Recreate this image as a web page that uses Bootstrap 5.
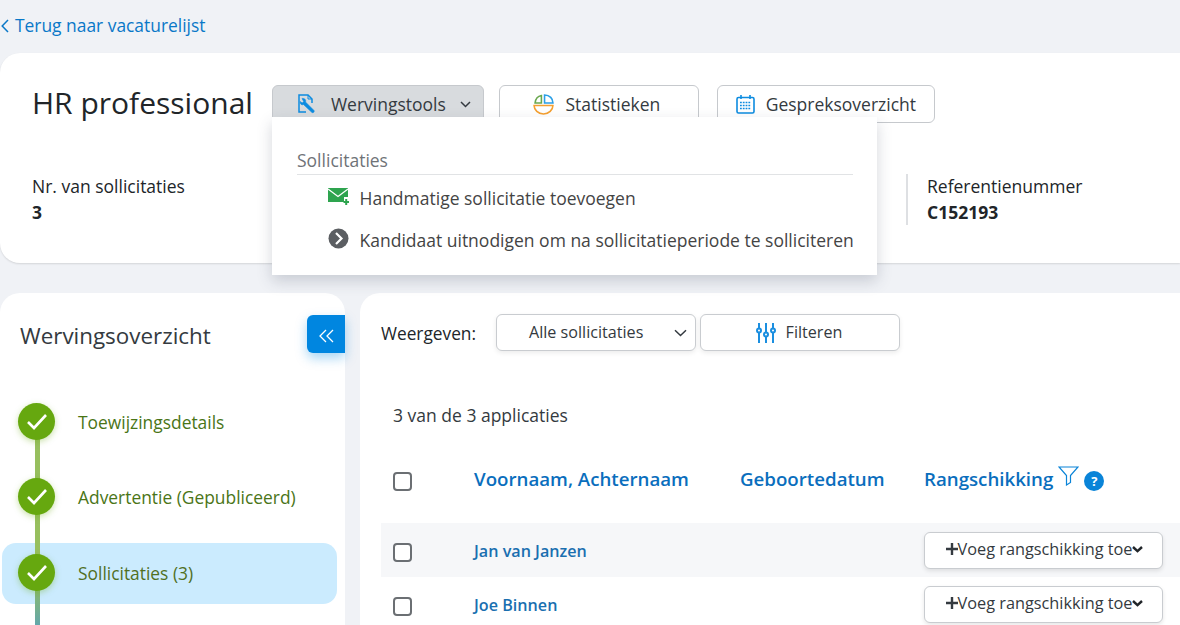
<!DOCTYPE html>
<html lang="nl">
<head>
<meta charset="utf-8">
<title>HR professional</title>
<link href="https://cdn.jsdelivr.net/npm/bootstrap@5.3.0/dist/css/bootstrap.min.css" rel="stylesheet">
<style>
html,body{height:625px;overflow:hidden}
body{background:#f0f2f6;font-family:"Open Sans","Liberation Sans",sans-serif;color:#212529;font-size:17.5px}
.back-row{height:53px;padding-left:1px;padding-top:15px;font-size:17.4px;line-height:21px}
.back-row a{color:#0a78c8;text-decoration:none}
.back-row svg{margin-right:6px;vertical-align:-1px}
.head-panel{height:210px;background:#fff;border-radius:20px 0 0 20px;box-shadow:0 1px 2px rgba(0,0,0,.12);padding:32px 0 0 32px;position:relative;width:1180px}
.job-title{font-size:30px;line-height:36px;padding-bottom:2px;font-weight:400;margin:0 19px 0 0;color:#212529;white-space:nowrap}
.tool-btn{height:38px;background:#fff;border:1px solid #c6c9cd;border-radius:6px;font-size:17.5px;color:#343a40;padding:0}
.tool-btn.is-open{background:#d8dbde;width:212px;margin-right:15px}
.tool-btn svg{flex:none}
.stat-btn{width:200px;margin-right:18px;padding-right:4px}
.talk-btn{width:218px}
.ico-gap{margin-left:11px}
.ico-gap-wide{margin-left:14px}
.tool-chev{margin-right:12px}
.stat-name{font-size:17.5px;line-height:24px;color:#212529}
.stat-val{font-size:17.5px;line-height:28px;font-weight:700}
.stats-row{margin-top:51px}
.ref-block{margin-left:auto;border-left:2px solid #dee0e3;padding-left:19px;height:51px;width:274px}
.tools-menu{position:absolute;left:272px;top:64px;width:605px;height:158px;background:#fff;box-shadow:0 6px 14px rgba(60,70,90,.22);padding:31px 24px 0 25px;z-index:5}
.menu-head{font-size:17.5px;line-height:24px;color:#6f7378;border-bottom:1px solid #e1e3e5;height:27px;margin-bottom:2px}
.menu-line{font-size:17.5px;line-height:24px;color:#444;white-space:nowrap;height:42px;padding-left:31px}
.menu-line svg{margin-top:-4px;flex:none}
.menu-txt{margin-left:2.5px}
.main-row{margin-top:30px;gap:15px}
.side-panel{width:345px;height:340px;background:#fff;border-radius:20px 20px 0 0;position:relative;flex:none;padding:27px 0 0 2px}
.side-title{font-size:22.4px;line-height:32px;color:#343a40;padding-left:18px;font-weight:400;margin:0}
.collapse-tab{position:absolute;right:0;top:22px;width:38px;height:38px;background:#0086e0;border-radius:6px 0 0 6px;box-shadow:0 5px 12px rgba(0,134,224,.35);border:0;padding:0}
.steps{margin-top:32px;width:335px;position:relative}
.step-row{height:75px;display:flex;align-items:center;padding:2px 0 0 16px;border-radius:14px;color:#4a7517;font-size:17.4px;position:relative}
.step-row.now{height:61px;padding-top:0;background:#cbebfe;color:#51701f;margin-top:9px}
.step-row .step-dot{margin-bottom:2px}
.step-dot{width:37px;height:37px;border-radius:50%;background:#66a80f;box-shadow:0 2px 6px rgba(102,168,15,.35);display:flex;align-items:center;justify-content:center;margin-right:23px;position:relative;z-index:2;flex:none}
.step-wire{position:absolute;left:33px;width:5px;background:#97bf5e;z-index:1}
.wire-a{top:50px;height:50px}
.wire-b{top:125px;height:50px}
.wire-c{top:200px;height:50px;background:linear-gradient(#8fbb63,#5aa3bb)}
.work-panel{width:860px;height:340px;background:#fff;border-radius:20px 20px 0 0;padding:21px 0 0 21px;flex:none}
.view-label{font-size:17.3px;width:115px;padding-top:2px}
.select-btn,.filter-btn{height:37px;width:200px;border:1px solid #c9ccd0;border-radius:6px;background:#fff;font-size:16.15px;color:#343a40;box-shadow:0 2px 5px rgba(0,0,0,.08);padding:0}
.select-btn svg,.filter-btn svg{flex:none}
.select-btn .sel-txt{margin-left:32px}
.filter-btn{margin-left:4px;padding-right:2px}
.filter-txt{margin-left:10px}
.count-line{font-size:17.5px;line-height:24px;margin:52px 0 0 12px;color:#343a40}
.app-grid{width:799px}
.grid-line{display:flex;align-items:center}
.grid-head{height:96px;padding-top:8px}
.grid-item{height:54px}
.grid-item.odd{background:#f6f7f9}
.cell-a{width:93px;padding-left:12px;flex:none}
.cell-b{width:266px;flex:none}
.cell-c{width:184px;flex:none}
.cell-rank{display:flex;align-items:center}
.sort-link{color:#0a6ebd;font-weight:600;font-size:18.7px;text-decoration:none;white-space:nowrap}
.name-link{color:#1a6fb0;font-weight:600;font-size:16.15px;text-decoration:none}
.tick{width:19px;height:19px;border:2px solid #6b6f73;border-radius:4px;margin:5px 0 0;display:block;background:#fff;appearance:none}
.rank-btn{width:239px;height:37px;background:#fff;border:1px solid #c9ccd0;border-radius:6px;box-shadow:0 2px 4px rgba(0,0,0,.1);font-size:16.3px;color:#343a40;padding:0 0 2px 2px;display:flex;align-items:center;justify-content:center;flex:none}
.rank-btn svg{flex:none}
.funnel{margin:0 0 5px 5px;flex:none}
.help-dot{width:20px;height:20px;border-radius:50%;background:#0a84d8;color:#fff;font-weight:700;font-size:13px;line-height:20px;text-align:center;display:block;margin:5px 0 0 5px;flex:none}
</style>
</head>
<body>
<div class="back-row"><a href="#"><svg width="8" height="14" viewBox="0 0 8 14" fill="none" stroke="#0a78c8" stroke-width="1.5"><path d="M7 1 1.200 7 7 13"/></svg>Terug naar vacaturelijst</a></div>

<section class="head-panel">
  <div class="d-flex align-items-center">
    <h1 class="job-title">HR professional</h1>
    <button class="tool-btn is-open d-flex align-items-center" type="button">
      <svg class="ms-4" width="20" height="20" viewBox="0 0 20 20" fill="none" stroke="#0d8ce0" stroke-width="1.500"><path d="M9 18H2V1h9l4 4v4"/><path d="M11 1v4h4" stroke-width="1"/><path d="M5 4.500c2-.5 4.500 1 3.500 3.500l8.500 8.500c.8 1.200-.8 2.800-2 2L6.500 10.500C4.500 11.500 3 10 3.200 7.500l2 1.500 1.500-1.500z" fill="#0d8ce0" stroke-width=".6"/></svg>
      <span class="ico-gap-wide">Wervingstools</span>
      <svg class="ms-auto tool-chev" width="11" height="7" viewBox="0 0 11 7" fill="none" stroke="#343a40" stroke-width="1.500"><path d="M1 1 5.500 5.500 10 1"/></svg>
    </button>
    <button class="tool-btn stat-btn d-flex align-items-center justify-content-center" type="button">
      <svg width="21" height="21" viewBox="0 0 20 20" fill="none" stroke-width="1.500"><path d="M8 1.500C5 2 2.500 4.500 2 8.500h6z" stroke="#6aa84f"/><path d="M11 1v7.500h8C19 4.500 16 1 11 1z" stroke="#2b9fe6"/><path d="M1 11h18c0 4-4 8-9 8s-9-4-9-8z" stroke="#f5a030"/></svg>
      <span class="ico-gap">Statistieken</span>
    </button>
    <button class="tool-btn talk-btn d-flex align-items-center justify-content-center" type="button">
      <svg width="19" height="19" viewBox="0 0 19 19"><rect x="1" y="2.500" width="17" height="15.500" rx="1.500" fill="none" stroke="#0d8ce0" stroke-width="1.600"/><path d="M5 0v4M14 0v4" stroke="#0d8ce0" stroke-width="1.600"/><path d="M4 7.500h11M4 10.500h11M4 13.500h11" stroke="#0d8ce0" stroke-width="1.600" stroke-dasharray="1.800 1"/></svg>
      <span class="ico-gap">Gespreksoverzicht</span>
    </button>
  </div>
  <div class="d-flex stats-row">
    <div>
      <div class="stat-name">Nr. van sollicitaties</div>
      <div class="stat-val">3</div>
    </div>
    <div class="ref-block">
      <div class="stat-name">Referentienummer</div>
      <div class="stat-val">C152193</div>
    </div>
  </div>
  <div class="tools-menu">
    <div class="menu-head">Sollicitaties</div>
    <div class="menu-line d-flex align-items-center gap-2">
      <svg width="21" height="17" viewBox="0 0 21 17"><path d="M0 0h20v9h-4v5H0z" fill="#2ea44f"/><path d="M0 1l10 7.500L20 1" fill="none" stroke="#fff" stroke-width="1.200"/><path d="M15.500 14h5.500M18.200 11v6" stroke="#2ea44f" stroke-width="2"/></svg>
      <span class="menu-txt">Handmatige sollicitatie toevoegen</span>
    </div>
    <div class="menu-line d-flex align-items-center gap-2">
      <svg width="21" height="21" viewBox="0 0 21 21"><circle cx="10.500" cy="10.500" r="10" fill="#5b5e62"/><path d="M8 5l5.500 5.500L8 16" fill="none" stroke="#fff" stroke-width="2.200"/></svg>
      <span class="menu-txt">Kandidaat uitnodigen om na sollicitatieperiode te solliciteren</span>
    </div>
  </div>
</section>

<div class="d-flex main-row">
  <aside class="side-panel">
    <h2 class="side-title">Wervingsoverzicht</h2>
    <button class="collapse-tab" type="button" aria-label="Inklappen"><svg width="15" height="14" viewBox="0 0 15 14" fill="none" stroke="#fff" stroke-width="1.300"><path d="M7 1 1 7l6 6M14 1 8 7l6 6"/></svg></button>
    <div class="steps">
      <span class="step-wire wire-a"></span><span class="step-wire wire-b"></span><span class="step-wire wire-c"></span>
      <div class="step-row"><span class="step-dot"><svg width="22" height="18" viewBox="0 0 22 18" fill="none" stroke="#fff" stroke-width="2.600"><path d="M2 9l6 6L20 2"/></svg></span>Toewijzingsdetails</div>
      <div class="step-row"><span class="step-dot"><svg width="22" height="18" viewBox="0 0 22 18" fill="none" stroke="#fff" stroke-width="2.600"><path d="M2 9l6 6L20 2"/></svg></span>Advertentie (Gepubliceerd)</div>
      <div class="step-row now"><span class="step-dot"><svg width="22" height="18" viewBox="0 0 22 18" fill="none" stroke="#fff" stroke-width="2.600"><path d="M2 9l6 6L20 2"/></svg></span>Sollicitaties (3)</div>
    </div>
  </aside>
  <main class="work-panel">
    <div class="d-flex align-items-center">
      <span class="view-label">Weergeven:</span>
      <button class="select-btn d-flex align-items-center" type="button"><span class="sel-txt">Alle sollicitaties</span><svg class="ms-auto me-2" width="13" height="8" viewBox="0 0 13 8" fill="none" stroke="#343a40" stroke-width="1.500"><path d="M1 1.200 6.500 6.500 12 1.200"/></svg></button>
      <button class="filter-btn d-flex align-items-center justify-content-center" type="button"><svg width="20" height="20" viewBox="0 0 20 20" fill="none" stroke="#1b8fe0" stroke-width="2"><path d="M3 0v5M3 10v10M10 0v9M10 14v6M17 0v5M17 10v10"/><circle cx="3" cy="7.500" r="2"/><circle cx="10" cy="11.500" r="2"/><circle cx="17" cy="7.500" r="2"/></svg><span class="filter-txt">Filteren</span></button>
    </div>
    <div class="count-line">3 van de 3 applicaties</div>
    <div class="app-grid">
      <div class="grid-line grid-head">
        <div class="cell-a"><input class="tick" type="checkbox" aria-label="Alles"></div>
        <div class="cell-b"><a class="sort-link" href="#">Voornaam, Achternaam</a></div>
        <div class="cell-c"><a class="sort-link" href="#">Geboortedatum</a></div>
        <div class="cell-rank"><a class="sort-link" href="#">Rangschikking</a><svg class="funnel" width="21" height="20" viewBox="0 0 21 20" fill="none" stroke="#0a84d8" stroke-width="1.200"><path d="M1 1h19l-7.500 8.500v7l-4 2.500V9.500z"/></svg><span class="help-dot">?</span></div>
      </div>
      <div class="grid-line grid-item odd">
        <div class="cell-a"><input class="tick" type="checkbox" aria-label="Jan"></div>
        <div class="cell-b"><a class="name-link" href="#">Jan van Janzen</a></div>
        <div class="cell-c"></div>
        <button class="rank-btn" type="button"><svg width="12" height="12" viewBox="0 0 13 13" stroke="#343a40" stroke-width="2.600"><path d="M0 6.500h13M6.500 0v13"/></svg>Voeg rangschikking toe<svg width="11" height="7" viewBox="0 0 11 7" fill="none" stroke="#212529" stroke-width="2.400"><path d="M1 1l4.500 4.200L10 1"/></svg></button>
      </div>
      <div class="grid-line grid-item">
        <div class="cell-a"><input class="tick" type="checkbox" aria-label="Joe"></div>
        <div class="cell-b"><a class="name-link" href="#">Joe Binnen</a></div>
        <div class="cell-c"></div>
        <button class="rank-btn" type="button"><svg width="12" height="12" viewBox="0 0 13 13" stroke="#343a40" stroke-width="2.600"><path d="M0 6.500h13M6.500 0v13"/></svg>Voeg rangschikking toe<svg width="11" height="7" viewBox="0 0 11 7" fill="none" stroke="#212529" stroke-width="2.400"><path d="M1 1l4.500 4.200L10 1"/></svg></button>
      </div>
    </div>
  </main>
</div>
<script src="https://cdn.jsdelivr.net/npm/bootstrap@5.3.0/dist/js/bootstrap.bundle.min.js"></script>
</body>
</html>
